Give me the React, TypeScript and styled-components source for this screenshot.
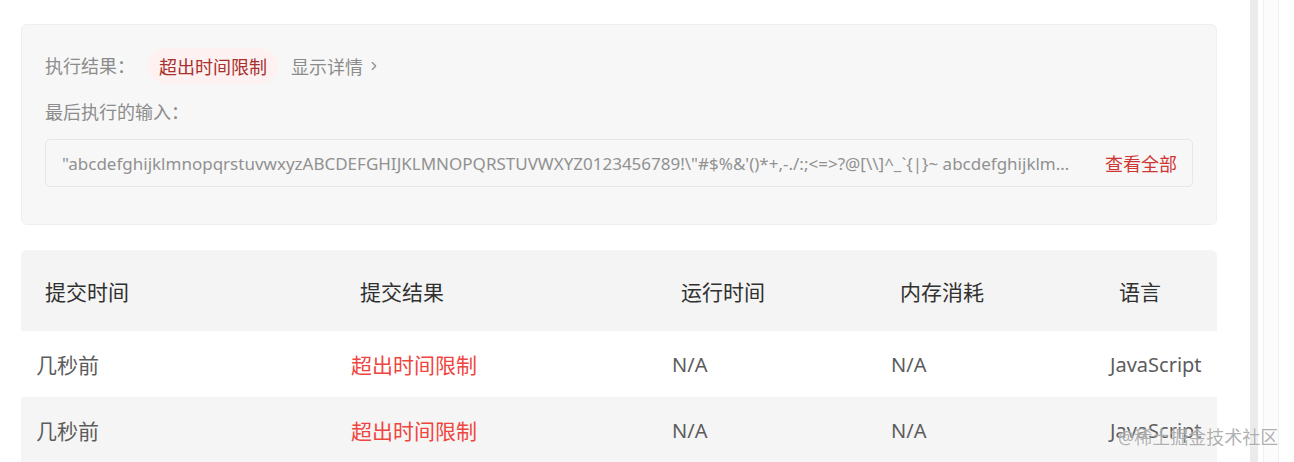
import styled, { createGlobalStyle } from 'styled-components';
import { ChevronRight } from 'lucide-react';

const GlobalStyle = createGlobalStyle`
  html, body {
    margin: 0;
    padding: 0;
    background: #ffffff;
    font-family: "Noto Sans", "Noto Sans CJK SC", sans-serif;
  }
  * { box-sizing: border-box; }
`;

const LAST_INPUT =
  '"abcdefghijklmnopqrstuvwxyzABCDEFGHIJKLMNOPQRSTUVWXYZ0123456789!\\"#$%&\'()*+,-./:;<=>?@[\\\\]^_`{|}~ abcdefghijklmnopqrstuvwxyzABCDEFGHIJKLMNOPQRSTUVWXYZ0123456789"';

const columns = ['提交时间', '提交结果', '运行时间', '内存消耗', '语言'];

const submissions = [
  { time: '几秒前', status: '超出时间限制', runtime: 'N/A', memory: 'N/A', lang: 'JavaScript' },
  { time: '几秒前', status: '超出时间限制', runtime: 'N/A', memory: 'N/A', lang: 'JavaScript' },
];

const App = () => {
  return (
    <Page>
      <GlobalStyle />
      <Main>
        <ResultCard>
          <ResultRow>
            <Label>执行结果：</Label>
            <StatusPill>超出时间限制</StatusPill>
            <DetailLink>
              显示详情
              <ChevronRight size={14} strokeWidth={2} />
            </DetailLink>
          </ResultRow>
          <Label>最后执行的输入：</Label>
          <InputBox>
            <InputText>{LAST_INPUT}</InputText>
            <ViewAll>查看全部</ViewAll>
          </InputBox>
        </ResultCard>

        <Table>
          <HeaderRow>
            {columns.map(c => (
              <HeaderCell key={c}>{c}</HeaderCell>
            ))}
          </HeaderRow>
          {submissions.map((s, i) => (
            <BodyRow key={i} $striped={i % 2 === 1}>
              <Cell>{s.time}</Cell>
              <Cell $error>{s.status}</Cell>
              <Cell $latin>{s.runtime}</Cell>
              <Cell $latin>{s.memory}</Cell>
              <Cell $latin>{s.lang}</Cell>
            </BodyRow>
          ))}
        </Table>
      </Main>

      <Gutter />
      <ScrollRail />
      <ScrollTrack />

      <Watermark>@稀土掘金技术社区</Watermark>
    </Page>
  );
};

const Page = styled.div`
  position: relative;
  display: flex;
  align-items: stretch;
  width: 1294px;
  height: 462px;
  overflow: hidden;
`;

const Main = styled.div`
  width: 1217px;
  flex-shrink: 0;
  padding: 24px 0 0 21px;
  display: flex;
  flex-direction: column;
  gap: 25px;
`;

const ResultCard = styled.div`
  flex-shrink: 0;
  height: 201px;
  background: #f7f7f7;
  border: 1px solid #efefef;
  border-radius: 6px;
  padding: 23px 23px 0 23px;
  display: flex;
  flex-direction: column;
`;

const ResultRow = styled.div`
  display: flex;
  align-items: center;
  height: 36px;
  gap: 13px;
  margin-bottom: 15px;
`;

const Label = styled.div`
  font-size: 18px;
  line-height: 26px;
  color: #8c8c8c;
`;

const StatusPill = styled.span`
  display: inline-flex;
  align-items: center;
  height: 36px;
  padding: 0 11px;
  border-radius: 18px;
  background: #fdf1f1;
  color: #a8302d;
  font-size: 18px;
`;

const DetailLink = styled.span`
  display: inline-flex;
  align-items: center;
  gap: 4px;
  font-size: 18px;
  color: #8c8c8c;
  cursor: pointer;
`;

const InputBox = styled.div`
  margin-top: 14px;
  height: 48px;
  flex-shrink: 0;
  border: 1px solid #e6e6e6;
  border-radius: 5px;
  background: #f7f7f7;
  padding: 0 15px 0 16px;
  display: flex;
  align-items: center;
  gap: 34px;
`;

const InputText = styled.div`
  flex: 1;
  min-width: 0;
  white-space: nowrap;
  overflow: hidden;
  text-overflow: ellipsis;
  font-size: 17px;
  color: #919191;
`;

const ViewAll = styled.span`
  flex-shrink: 0;
  font-size: 18px;
  color: #cf3632;
  cursor: pointer;
`;

const Table = styled.div`
  flex-shrink: 0;
  display: flex;
  flex-direction: column;
`;

const gridColumns = '315px 321px 219px 219px 1fr';

const HeaderRow = styled.div`
  display: grid;
  grid-template-columns: ${gridColumns};
  align-items: center;
  height: 81px;
  background: #f4f4f4;
  border-radius: 6px 6px 0 0;
`;

const HeaderCell = styled.div`
  padding-left: 24px;
  font-size: 21px;
  color: #303030;
`;

const BodyRow = styled.div<{ $striped?: boolean }>`
  display: grid;
  grid-template-columns: ${gridColumns};
  align-items: center;
  height: 66px;
  background: ${p => (p.$striped ? '#f5f5f5' : '#ffffff')};
`;

const Cell = styled.div<{ $error?: boolean; $latin?: boolean }>`
  padding-left: 15px;
  font-size: ${p => (p.$latin ? '20px' : '21px')};
  color: ${p => (p.$error ? '#f0453f' : '#5c5c5c')};
`;

const Gutter = styled.div`
  width: 33px;
  flex-shrink: 0;
`;

const ScrollRail = styled.div`
  width: 8px;
  flex-shrink: 0;
  background: #ebebeb;
`;

const ScrollTrack = styled.div`
  width: 16px;
  flex-shrink: 0;
  margin-left: 5px;
  background: #fcfcfc;
  border-left: 1px solid #f0f0f0;
  border-right: 1px solid #f0f0f0;
`;

const Watermark = styled.div`
  position: absolute;
  left: 1118px;
  top: 423px;
  font-size: 18px;
  color: rgba(150, 150, 150, 0.75);
  text-shadow: 0 0 2px #fff;
  white-space: nowrap;
  pointer-events: none;
`;

export default App;
